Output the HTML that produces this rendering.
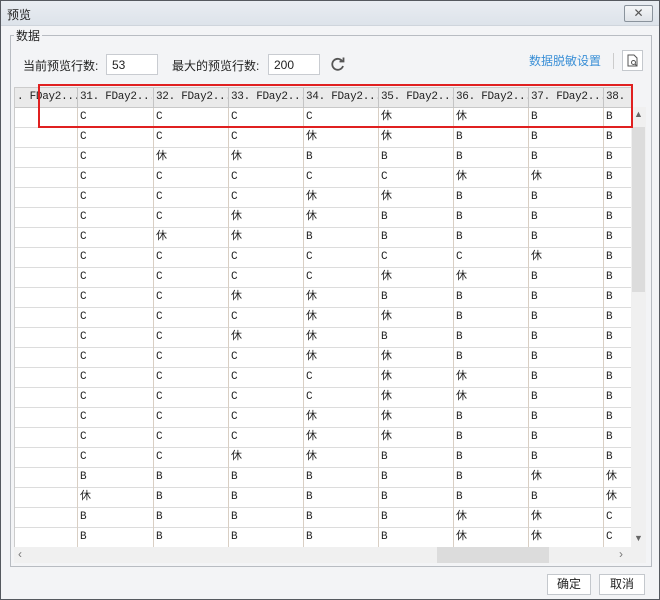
<!DOCTYPE html><html><head><meta charset="utf-8"><style>
*{box-sizing:border-box;margin:0;padding:0}
body{width:660px;height:600px;overflow:hidden;font-family:"Liberation Sans","Noto Sans CJK SC",sans-serif;font-size:12px;color:#222;background:#fff}
.win{position:absolute;left:0;top:0;width:660px;height:600px;border:1px solid #55595f;background:#f3f4f6}
.title{position:absolute;left:0;top:0;width:658px;height:25px;background:linear-gradient(#e9edf2,#dde3ea);border-bottom:1px solid #cfd5dc}
.title span{position:absolute;left:6px;top:5px;font-size:12px}
.close{position:absolute;left:623px;top:4px;width:29px;height:17px;border:1px solid #8a939c;border-radius:2px;background:linear-gradient(#f4f6f8,#dfe3e8);text-align:center;font-size:12px;line-height:15px;color:#555}
.grp{position:absolute;left:9px;top:34px;width:642px;height:532px;border:1px solid #b8bcc2}
.grpl{position:absolute;left:13px;top:26px;background:#f3f4f6;padding:0 2px;font-size:12px}
.lbl{position:absolute;top:56px;font-size:12px}
.inp{position:absolute;top:53px;height:21px;background:#fff;border:1px solid #c9ccd1;padding:3px 5px;font-size:12px}
.link{position:absolute;left:528px;top:51px;color:#3a8fd6;font-size:12px}
.tbl{position:absolute;left:13px;top:86px;width:617px;height:460px;overflow:hidden;background:#fff;border-left:1px solid #ccc;border-top:1px solid #ccc}
.row{position:absolute;left:0;height:20px;width:620px;border-bottom:1px solid #dcdcdc}
.hd{background:#eaeaea;border-bottom:1px solid #c8c8c8}
.c{position:absolute;top:0;width:75px;height:20px;line-height:19px;padding-left:2px;font-family:"Liberation Mono","Noto Sans CJK SC",monospace;font-size:11px;border-left:1px solid #d9cfc4;white-space:nowrap;overflow:hidden}
.hd .c{border-left:1px solid #c4c4c4;letter-spacing:-0.3px}
.vs{position:absolute;left:630px;top:106px;width:15px;height:440px;background:#f0f0f0}
.hs{position:absolute;left:13px;top:546px;width:632px;height:16px;background:#f0f0f0}
.btn{position:absolute;top:573px;height:21px;border:1px solid #c4c8cd;background:#fff;text-align:center;line-height:19px;font-size:12px}
</style></head><body><div class="win">
<div class="title"><span>预览</span><div class="close">✕</div></div>
<div class="grp"></div><div class="grpl">数据</div>
<div class="lbl" style="left:22px">当前预览行数:</div><div class="inp" style="left:105px;width:52px">53</div>
<div class="lbl" style="left:171px">最大的预览行数:</div><div class="inp" style="left:267px;width:52px">200</div>
<svg style="position:absolute;left:329px;top:55px" width="16" height="16" viewBox="0 0 16 16"><path d="M12.5 5.5A5.5 5.5 0 1 0 13 10" fill="none" stroke="#555" stroke-width="1.8"/><path d="M9.5 5.5h4v-4" fill="none" stroke="#555" stroke-width="1.8"/></svg>
<div class="link">数据脱敏设置</div>
<div style="position:absolute;left:612px;top:52px;width:1px;height:16px;background:#ccc"></div>
<div style="position:absolute;left:621px;top:49px;width:21px;height:21px;border:1px solid #c4c8cd;background:#fff"><svg width="19" height="19" viewBox="0 0 19 19"><path d="M5 4h6l3 3v8H5z" fill="none" stroke="#555"/><circle cx="10.5" cy="11.5" r="2" fill="none" stroke="#555"/><path d="M12 13l2 2" stroke="#555"/></svg></div>
<div class="tbl" id="t"></div>
<div class="vs"><div style="position:absolute;left:1px;top:20px;width:13px;height:165px;background:#dcdcdc"></div><span style="position:absolute;left:3px;top:2px;font-size:9px;color:#666">▲</span><span style="position:absolute;left:3px;top:426px;font-size:9px;color:#666">▼</span></div>
<div class="hs"><span style="position:absolute;left:4px;top:0;color:#777">‹</span><div style="position:absolute;left:423px;top:0;width:112px;height:16px;background:#dcdcdc"></div><span style="position:absolute;left:605px;top:0;color:#777">›</span></div>
<div style="position:absolute;left:37px;top:83px;width:595px;height:44px;border:2px solid #e02020"></div>
<div class="btn" style="left:546px;width:44px">确定</div><div class="btn" style="left:598px;width:46px">取消</div>
</div>
<script>
var d=["CCCC休休BB","CCC休休BBB","C休休BBBBB","CCCCC休休B","CCC休休BBB","CC休休BBBB","C休休BBBBB","CCCCCC休B","CCCC休休BB","CC休休BBBB","CCC休休BBB","CC休休BBBB","CCC休休BBB","CCCC休休BB","CCCC休休BB","CCC休休BBB","CCC休休BBB","CC休休BBBB","BBBBBB休休","休BBBBBB休","BBBBB休休C","BBBBB休休C"];
var xs=[62,138,213,288,363,438,513,588],h='<div class="row hd" style="top:0"><div class="c" style="left:0;border:0;width:62px">. FDay2...</div>';
for(var i=0;i<8;i++)h+='<div class="c" style="left:'+xs[i]+'px">'+(31+i)+'. FDay2...</div>';
h+='</div>';
d.forEach(function(r,j){h+='<div class="row" style="top:'+(20+j*20)+'px">';for(var i=0;i<8;i++)h+='<div class="c" style="left:'+xs[i]+'px">'+r[i]+'</div>';h+='</div>'});
document.getElementById('t').innerHTML=h;
</script></body></html>
